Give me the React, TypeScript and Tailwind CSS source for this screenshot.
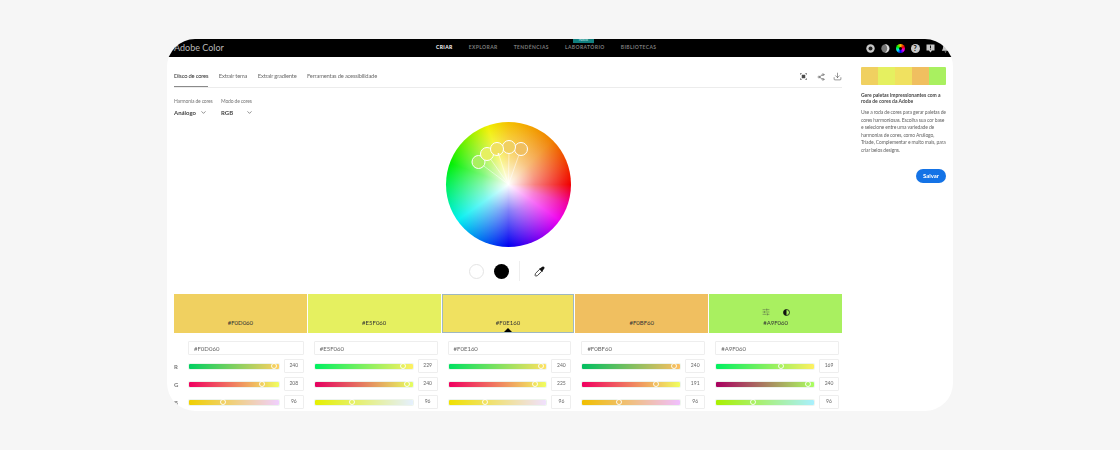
import { ChevronDown, Download, Share2, SlidersHorizontal } from 'lucide-react';

const font = { sans: 'font-["Lato","Liberation_Sans",sans-serif]' };

const swatches = [
  { hex: '#F0D060', rgb: [240, 208, 96], bg: 'bg-[#f0d060]' },
  { hex: '#E5F060', rgb: [229, 240, 96], bg: 'bg-[#e5f060]' },
  { hex: '#F0E160', rgb: [240, 225, 96], bg: 'bg-[#f0e160]' },
  { hex: '#F0BF60', rgb: [240, 191, 96], bg: 'bg-[#f0bf60]' },
  { hex: '#A9F060', rgb: [169, 240, 96], bg: 'bg-[#a9f060]' },
];

const handles = [
  { x: 478.5, y: 162 },
  { x: 487, y: 154 },
  { x: 497, y: 149 },
  { x: 509, y: 147 },
  { x: 521, y: 149 },
];

const navItems = ['CRIAR', 'EXPLORAR', 'TENDÊNCIAS', 'LABORATÓRIO', 'BIBLIOTECAS'];
const tabs = ['Disco de cores', 'Extrair tema', 'Extrair gradiente', 'Ferramentas de acessibilidade'];
const channels = ['R', 'G', 'B'];

const HeaderIcons = () => (
  <div className="flex items-center gap-[6px] text-[#c8c8c8]">
    <svg width="9" height="9" viewBox="0 0 9 9">
      <circle cx="4.5" cy="4.5" r="4.2" fill="#c8c8c8" />
      <circle cx="4.5" cy="4.5" r="2" fill="#222" />
    </svg>
    <svg width="9" height="9" viewBox="0 0 9 9">
      <circle cx="4.5" cy="4.5" r="4.2" fill="#777" />
      <path d="M4 .3a4.2 4.2 0 0 1 0 8.4 5 5 0 0 0 0-8.4z" fill="#ddd" />
    </svg>
    <div className="w-[9px] h-[9px] rounded-full bg-[conic-gradient(#f5c000,#f00000,#f000f0,#0000f0,#00f0f0,#00f000,#f5c000)] flex items-center justify-center">
      <div className="w-[3px] h-[3px] rounded-full bg-black" />
    </div>
    <div className="w-[9px] h-[9px] rounded-full bg-[#c8c8c8] text-black text-[7px] font-bold leading-[9px] text-center">?</div>
    <svg width="9" height="9" viewBox="0 0 9 9">
      <path d="M.5.5h8v6H6L4.5 8.5 3 6.5H.5z" fill="#c8c8c8" />
      <rect x="4" y="1.5" width="1" height="2.5" fill="#111" />
      <rect x="4" y="4.6" width="1" height="1" fill="#111" />
    </svg>
    <svg width="9" height="9" viewBox="0 0 9 9">
      <path d="M4.5.5C2.8.5 2 2 2 3.5 2 5.5 1 6 .8 6.8h7.4C8 6 7 5.5 7 3.5 7 2 6.2.5 4.5.5zM3.500 7.500h2L4.500 8.700z" fill="#c8c8c8" />
    </svg>
  </div>
);

const Slider = ({ channel, rgb }: { channel: number; rgb: number[] }) => {
  const from = rgb.map((v, i) => (i === channel ? 0 : v));
  const to = rgb.map((v, i) => (i === channel ? 255 : v));
  return (
    <div
      className="relative flex-1 h-[5px] rounded-[1px] shadow-[0_0_0_1px_rgba(230,240,230,0.7)]"
      style={{ background: `linear-gradient(to right, rgb(${from.join(',')}), rgb(${to.join(',')}))` }}
    >
      <div
        className="absolute top-[-0.5px] w-[6px] h-[6px] -ml-[3px] rounded-full border border-white/90"
        style={{ left: `${(rgb[channel] / 255) * 100}%` }}
      />
    </div>
  );
};

const App = () => {
  return (
    <div className={`w-[1120px] h-[450px] overflow-hidden bg-[#f6f6f6] pt-[39px] pl-[167px] ${font.sans}`}>
      <div className="w-[786px] h-[372px] rounded-[28px] overflow-hidden bg-white flex flex-col blur-[0.3px]">
        <header className="relative h-[18px] shrink-0 bg-black flex items-center pl-[7px] pr-[3.5px]">
          <span className="w-[262px] text-[9px] text-[#b8b8b8]">Adobe Color</span>
          <nav className="flex items-center gap-[16px] text-[5px] font-bold tracking-[0.4px] text-[#7d7d7d]">
            {navItems.map((item, i) => (
              <span key={item} className={`relative ${i === 0 ? 'text-white' : ''}`}>
                {item}
                {item === 'LABORATÓRIO' && (
                  <span className="absolute top-[-6px] left-[8px] w-[21px] h-[5px] bg-[#12807f] text-[4px] leading-[4px] text-center font-normal tracking-normal text-[#b8e6e6]">
                    Novo
                  </span>
                )}
              </span>
            ))}
          </nav>
          <div className="ml-auto">
            <HeaderIcons />
          </div>
        </header>

        <div className="flex flex-1 min-h-0">
          <main className="w-[668px] ml-[7px] shrink-0">
            <div className="h-[31px] border-b border-[#ececec] flex items-end justify-between">
              <div className="flex gap-[10.5px] text-[5.8px] tracking-[-0.2px] text-[#6e6e6e]">
                {tabs.map((tab, i) => (
                  <span
                    key={tab}
                    className={`h-[16px] pt-[1px] ${i === 0 ? 'border-b-[1.5px] border-[#8a8a8a] text-[#2c2c2c]' : ''}`}
                  >
                    {tab}
                  </span>
                ))}
              </div>
              <div className="flex items-center pb-[6px] text-[#4b4b4b]">
                <svg width="7" height="7" viewBox="0 0 8 8" fill="none" stroke="currentColor" strokeWidth="0.8">
                  <path d="M.4 2V.4H2M6 .4h1.600V2M.4 6v1.600H2M6 7.600h1.600V6" />
                  <rect x="2" y="2" width="4" height="4" fill="currentColor" stroke="none" />
                </svg>
                <Share2 size={8} strokeWidth={1.5} className="ml-[10.5px]" />
                <Download size={9} strokeWidth={1.5} className="ml-[8px]" />
              </div>
            </div>

            <div className="flex gap-[8px] mt-[10px] h-[24px]">
              <div className="w-[39px]">
                <p className="text-[5px] leading-[7px] text-[#777] tracking-[-0.15px] whitespace-nowrap">Harmonia de cores</p>
                <p className="mt-[3px] flex items-center text-[6px] leading-[9px] font-bold text-[#444]">
                  Análogo
                  <ChevronDown size={7} className="ml-[4px]" />
                </p>
              </div>
              <div className="w-[40px]">
                <p className="text-[5px] leading-[7px] text-[#777] tracking-[-0.15px] whitespace-nowrap">Modo de cores</p>
                <p className="mt-[3px] flex items-center text-[6px] leading-[9px] font-bold text-[#444]">
                  RGB
                  <ChevronDown size={7} className="ml-[13px]" />
                </p>
              </div>
            </div>

            <div className="relative w-[125px] h-[125px] mx-auto rounded-full bg-[conic-gradient(#f5c000_0deg,#f08000_45deg,#f00000_90deg,#f000a0_108deg,#f000f0_125deg,#0000f0_180deg,#00f0f0_235deg,#00f000_290deg,#f0f000_340deg,#f5c000_360deg)]">
              <div className="absolute inset-0 rounded-full bg-[radial-gradient(circle,#ffffff_0%,rgba(255,255,255,0.5)_30%,rgba(255,255,255,0)_70%)]" />
              <svg className="absolute inset-0" width="125" height="125" viewBox="446 122 125 125" fill="none">
                {handles.map((h) => (
                  <line key={h.x} x1={h.x} y1={h.y} x2="508.500" y2="184.500" stroke="white" strokeWidth="0.500" />
                ))}
                <circle cx={handles[0].x} cy={handles[0].y} r="6.500" fill="#a9f060" stroke="white" />
                <circle cx={handles[1].x} cy={handles[1].y} r="6.500" fill="#e5f060" stroke="white" />
                <circle cx={handles[4].x} cy={handles[4].y} r="6.500" fill="#f0bf60" stroke="white" />
                <circle cx={handles[3].x} cy={handles[3].y} r="6.500" fill="#f0d060" stroke="white" />
                <circle cx={handles[2].x} cy={handles[2].y} r="6.500" fill="#f0e160" stroke="white" />
                <circle cx="498.500" cy="154" r="1" fill="white" />
              </svg>
            </div>

            <div className="flex items-center justify-center mt-[14px] h-[20px] pr-[3px]">
              <div className="w-[15px] h-[15px] rounded-full border border-[#e4e4e4] bg-white" />
              <div className="w-[15px] h-[15px] rounded-full bg-black ml-[10px]" />
              <div className="w-px h-[20px] bg-[#eeeeee] ml-[10px]" />
              <svg className="ml-[14px]" width="11" height="11" viewBox="0 0 10 10">
                <path d="M5.300 2.800 7.200 4.700 3.200 8.700 1.500 9.200 1 8.500 1.300 6.800z" fill="white" stroke="#444" strokeWidth="0.900" />
                <path d="M4.600 2.600 6 1.800 7.500.7Q8.500.100 9.300.800 10 1.700 9.200 2.600L8.100 4 7.500 5.500z" fill="#111" />
              </svg>
            </div>

            <div className="grid grid-cols-5 gap-px mt-[13px] h-[39px] text-[6px] text-[#333]">
              {swatches.map((s, i) => (
                <div
                  key={s.hex}
                  className={`relative flex flex-col items-center justify-end ${s.bg} ${i === 2 ? 'pb-[5px] border border-[#9fb8c0]' : 'pb-[6px]'}`}
                >
                  {i === 4 && (
                    <div className="flex items-center gap-[13px] mb-[2px] text-[#444]">
                      <SlidersHorizontal size={8} strokeWidth={1.300} />
                      <svg width="7" height="7" viewBox="0 0 7 7">
                        <circle cx="3.500" cy="3.500" r="3" fill="none" stroke="#111" strokeWidth="0.800" />
                        <path d="M3.500.5a3 3 0 0 0 0 6z" fill="#111" />
                      </svg>
                    </div>
                  )}
                  {s.hex}
                  {i === 2 && (
                    <div className="absolute bottom-0 left-1/2 -translate-x-1/2 border-x-[4px] border-b-[4px] border-x-transparent border-b-black" />
                  )}
                </div>
              ))}
            </div>

            <div className="grid grid-cols-5 gap-px mt-[8px] text-[5.500px] text-[#666]">
              {swatches.map((s, i) => (
                <div key={s.hex} className={`flex flex-col ${i === 0 ? 'pl-[14px]' : 'pl-[6px]'} pr-[3px]`}>
                  <div className="h-[14px] border border-[#eeeeee] rounded-[1px] flex items-center pl-[5px] text-[6px]">
                    {s.hex}
                  </div>
                  {channels.map((c, ci) => (
                    <div key={c} className="relative flex items-center gap-[5px] h-[14px] mt-[4px] pl-px">
                      {i === 0 && <span className="absolute left-[-14px] text-[6px] font-bold text-[#777]">{c}</span>}
                      <Slider channel={ci} rgb={s.rgb} />
                      <div className="w-[20px] h-[14px] border border-[#eeeeee] rounded-[1px] flex items-center justify-center text-[5px]">
                        {s.rgb[ci]}
                      </div>
                    </div>
                  ))}
                </div>
              ))}
            </div>
          </main>

          <aside className="w-[85px] ml-[19px] pt-[10px]">
            <div className="grid grid-cols-5 h-[18px] rounded-[1px] overflow-hidden">
              {swatches.map((s) => (
                <div key={s.hex} className={s.bg} />
              ))}
            </div>
            <h3 className="mt-[7px] text-[5px] leading-[6px] font-bold text-[#444] whitespace-nowrap">
              Gere paletas impressionantes com a<br />roda de cores da Adobe
            </h3>
            <p className="mt-[5px] text-[5px] leading-[7.600px] tracking-[-0.12px] text-[#666] whitespace-nowrap">
              Use a roda de cores para gerar paletas de<br />
              cores harmoniosas. Escolha sua cor base<br />
              e selecione entre uma variedade de<br />
              harmonias de cores, como Análogo,<br />
              Tríade, Complementar e muito mais, para<br />
              criar belos designs.
            </p>
            <div className="flex justify-end mt-[14px]">
              <button className="w-[30px] h-[14px] rounded-full bg-[#1473e6] text-white text-[6px] font-bold">Salvar</button>
            </div>
          </aside>
        </div>
      </div>
    </div>
  );
};

export default App;
